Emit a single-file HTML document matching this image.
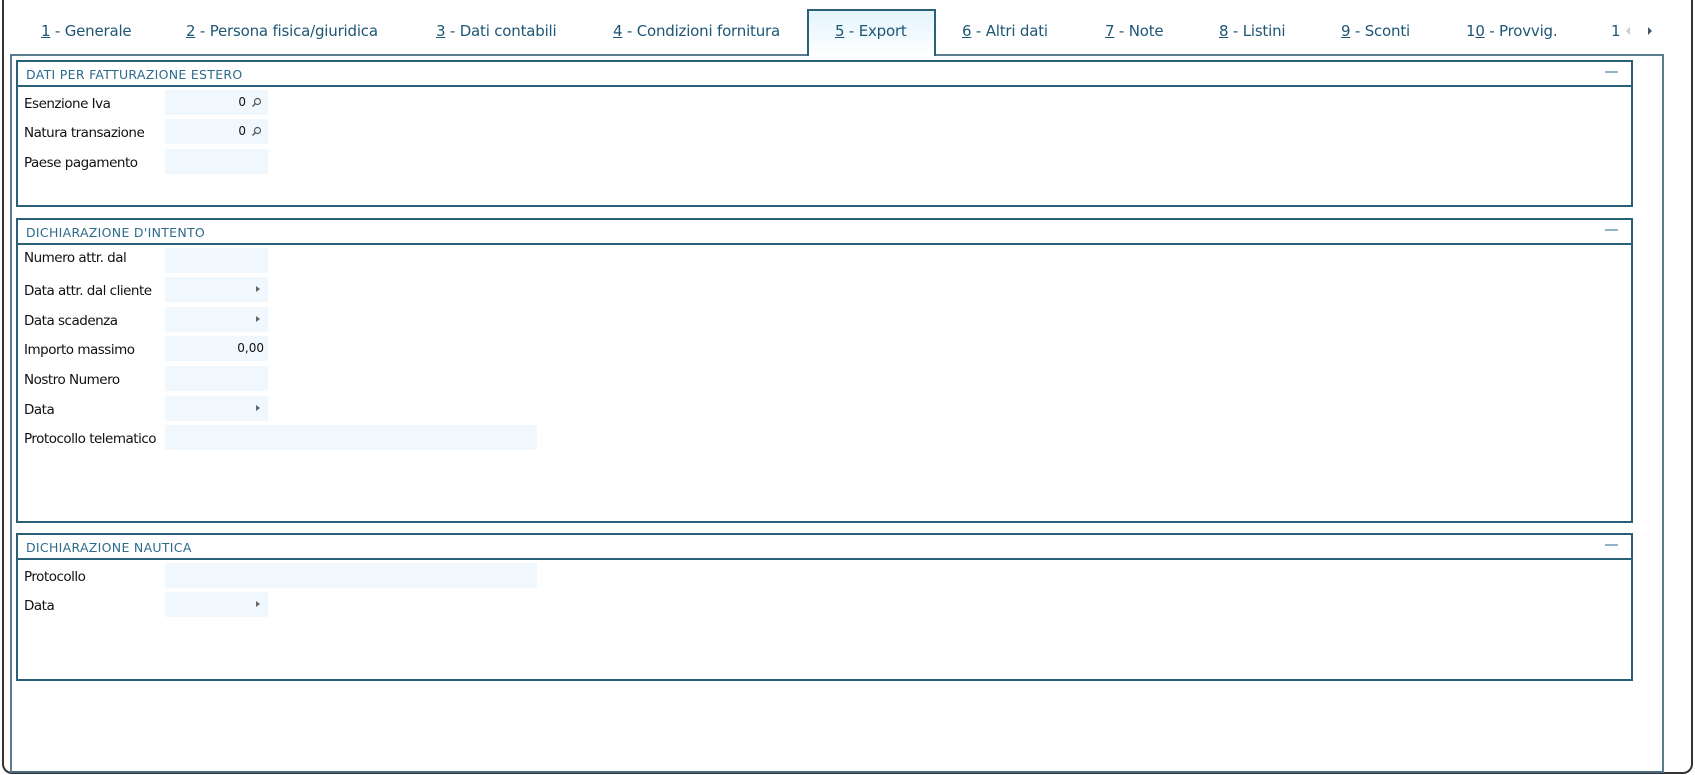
<!DOCTYPE html>
<html><head><meta charset="utf-8"><style>
*{margin:0;padding:0;box-sizing:border-box}
body{width:1695px;height:775px;background:#fff;position:relative;overflow:hidden;font-family:Tahoma,"DejaVu Sans","Liberation Sans",sans-serif}
.abs{position:absolute}
.outer{left:2px;top:-10px;width:1691px;height:784px;border:2px solid #333;border-top:none;border-radius:0 0 10px 10px}
.content{left:10px;top:54px;width:1654px;height:719px;border:2px solid #5a7a90;border-bottom:2px solid #4a6a80}
.tab{position:absolute;top:22px;font-size:15px;color:#1e5676;white-space:nowrap;font-family:"DejaVu Sans","Liberation Sans",sans-serif;letter-spacing:-0.2px}
.tab u{text-decoration:underline}
.active{left:807px;top:9px;width:129px;height:47px;border:2px solid #2a607a;border-bottom:none;background:linear-gradient(#e2f4fc,#fff)}
.box{position:absolute;left:16px;width:1617px;border:2px solid #2a5f78}
.hdr{height:25px;border-bottom:2px solid #2a5f78;font-size:12.5px;color:#2d6b8c;padding:5px 0 0 8px;position:relative;font-family:"DejaVu Sans","Liberation Sans",sans-serif;letter-spacing:0.3px}
.hdr:after{content:"";position:absolute;right:13px;top:9px;width:13px;height:2px;background:#8fb6c8}
.lbl{position:absolute;left:24px;font-size:13.5px;color:#111;font-family:"DejaVu Sans","Liberation Sans",sans-serif;letter-spacing:-0.5px}
.inp{position:absolute;left:165px;width:103px;height:25px;background:#f0f8fd;font-size:12px;color:#111;text-align:right;padding:5px 0 0 0}
.arr{position:absolute;right:8px;top:9px;width:0;height:0;border-left:4px solid #666;border-top:3.5px solid transparent;border-bottom:3.5px solid transparent}
</style></head><body>
<div class="abs outer"></div>
<div class="abs content"></div>
<div class="abs active"></div>
<div class="tab" style="left:41px"><u>1</u> - Generale</div>
<div class="tab" style="left:186px"><u>2</u> - Persona fisica/giuridica</div>
<div class="tab" style="left:436px"><u>3</u> - Dati contabili</div>
<div class="tab" style="left:613px"><u>4</u> - Condizioni fornitura</div>
<div class="tab" style="left:835px"><u>5</u> - Export</div>
<div class="tab" style="left:962px"><u>6</u> - Altri dati</div>
<div class="tab" style="left:1105px"><u>7</u> - Note</div>
<div class="tab" style="left:1219px"><u>8</u> - Listini</div>
<div class="tab" style="left:1341px"><u>9</u> - Sconti</div>
<div class="tab" style="left:1466px">1<u>0</u> - Provvig.</div>
<div class="tab" style="left:1611px">1</div>
<div class="abs" style="left:1626px;top:27px;border-right:4px solid #ccc;border-top:4px solid transparent;border-bottom:4px solid transparent"></div>
<div class="abs" style="left:1648px;top:27px;border-left:4px solid #456;border-top:4px solid transparent;border-bottom:4px solid transparent"></div>

<div class="box" style="top:60px;height:147px"><div class="hdr">DATI PER FATTURAZIONE ESTERO</div></div>
<div class="lbl" style="top:96px">Esenzione Iva</div>
<div class="inp" style="top:90px"><span style="margin-right:22px">0</span><svg class="abs" style="right:6px;top:7px" width="11" height="11" viewBox="0 0 11 11"><circle cx="6.5" cy="4.5" r="3" fill="none" stroke="#555" stroke-width="1.2"/><path d="M4.5 6.5L1.5 9.5" stroke="#555" stroke-width="1.4"/></svg></div>
<div class="lbl" style="top:125px">Natura transazione</div>
<div class="inp" style="top:119px"><span style="margin-right:22px">0</span><svg class="abs" style="right:6px;top:7px" width="11" height="11" viewBox="0 0 11 11"><circle cx="6.5" cy="4.5" r="3" fill="none" stroke="#555" stroke-width="1.2"/><path d="M4.5 6.5L1.5 9.5" stroke="#555" stroke-width="1.4"/></svg></div>
<div class="lbl" style="top:155px">Paese pagamento</div>
<div class="inp" style="top:149px"></div>

<div class="box" style="top:218px;height:305px"><div class="hdr">DICHIARAZIONE D'INTENTO</div></div>
<div class="lbl" style="top:250px">Numero attr. dal</div><div class="inp" style="top:248px"></div>
<div class="lbl" style="top:283px">Data attr. dal cliente</div><div class="inp" style="top:277px"><i class="arr"></i></div>
<div class="lbl" style="top:313px">Data scadenza</div><div class="inp" style="top:307px"><i class="arr"></i></div>
<div class="lbl" style="top:342px">Importo massimo</div><div class="inp" style="top:336px"><span style="margin-right:4px">0,00</span></div>
<div class="lbl" style="top:372px">Nostro Numero</div><div class="inp" style="top:366px"></div>
<div class="lbl" style="top:402px">Data</div><div class="inp" style="top:396px"><i class="arr"></i></div>
<div class="lbl" style="top:431px">Protocollo telematico</div><div class="inp" style="top:425px;width:372px"></div>

<div class="box" style="top:533px;height:148px"><div class="hdr">DICHIARAZIONE NAUTICA</div></div>
<div class="lbl" style="top:569px">Protocollo</div><div class="inp" style="top:563px;width:372px"></div>
<div class="lbl" style="top:598px">Data</div><div class="inp" style="top:592px"><i class="arr"></i></div>
</body></html>
